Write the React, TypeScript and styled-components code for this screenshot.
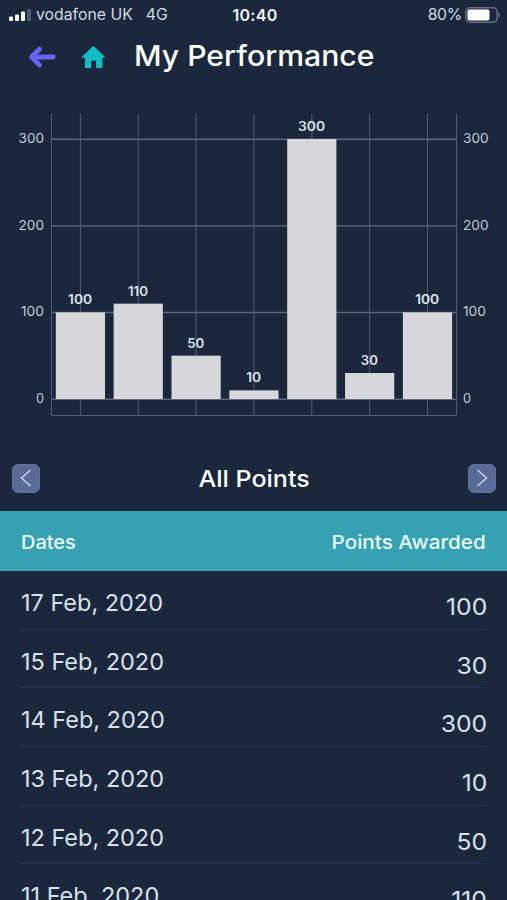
import React from "react";
import styled, { createGlobalStyle } from "styled-components";

const GlobalStyle = createGlobalStyle`
  html, body { margin: 0; background: #1a273d; overflow: hidden; }
  * { box-sizing: border-box; }
`;

const Screen = styled.main`
  width: 507px;
  height: 900px;
  overflow: hidden;
  display: flex;
  flex-direction: column;
  background: #1a273d;
  color: #fff;
  font-family: Inter, "Open Sans", sans-serif;
`;

const StatusBar = styled.header`
  height: 30px;
  flex: none;
  display: grid;
  grid-template-columns: 1fr auto 1fr;
  align-items: center;
  padding: 0 6px 0 9px;
  color: #d3d9e2;
  font-size: 15.8px;
  line-height: 30px;
`;

const Carrier = styled.div`
  display: flex;
  align-items: center;
  gap: 5px;
`;

const Network = styled.span`
  margin-left: 8px;
`;

const Clock = styled.div`
  color: #f4f6f9;
  font-weight: 600;
  font-size: 16px;
  letter-spacing: 0.3px;
`;

const Battery = styled.div`
  display: flex;
  align-items: center;
  justify-content: flex-end;
  gap: 3px;
  letter-spacing: -0.3px;
`;

const NavBar = styled.nav`
  height: 54px;
  flex: none;
  display: flex;
  align-items: center;
  padding: 0 0 0 28px;
`;

const IconButton = styled.button<{ $gap: number }>`
  display: flex;
  padding: 0;
  border: 0;
  background: none;
  margin-right: ${(p) => p.$gap}px;
`;

const Title = styled.h1`
  margin: 0 0 3px;
  font-size: 28px;
  font-weight: 500;
  line-height: 34px;
  white-space: nowrap;
  transform: scaleX(1.078);
  transform-origin: left;
`;

const ChartPanel = styled.section`
  height: 366px;
  flex: none;

  svg {
    display: block;
  }
`;

const Pager = styled.section`
  height: 61px;
  flex: none;
  display: flex;
  align-items: center;
  justify-content: space-between;
  padding: 0 11px 5px 12px;
`;

const PagerButton = styled.button`
  width: 28px;
  height: 29px;
  padding: 0;
  border: 1px solid #60729a;
  border-radius: 6px;
  background: #596c98;
  display: grid;
  place-items: center;
`;

const PagerTitle = styled.h2`
  margin: 2px 0 0;
  font-size: 23px;
  font-weight: 500;
  transform: scaleX(1.088);
`;

const TableHead = styled.div`
  height: 60px;
  flex: none;
  display: flex;
  align-items: center;
  justify-content: space-between;
  padding: 2px 21px 0;
  background: #36a1b2;
  color: #e9fafc;
  font-size: 19px;
  font-weight: 500;
`;

const HeadCell = styled.span<{ $align: "left" | "right" }>`
  transform: scaleX(${(p) => (p.$align === "left" ? 1.05 : 1.088)});
  transform-origin: ${(p) => p.$align};
`;

const Rows = styled.div`
  padding: 0 20px 0 21px;
`;

const Row = styled.div`
  height: 58.65px;
  display: flex;
  justify-content: space-between;
  border-bottom: 1px solid #24334b;
  color: #dae1ea;
  font-size: 23.5px;
  line-height: 30px;
  padding-top: 17px;
`;

const DateCell = styled.span`
  letter-spacing: -0.02px;
`;

const PointsCell = styled.span`
  padding-top: 4px;
  transform: scaleX(1.05);
  transform-origin: right;
`;

const records = [
  { date: "17 Feb, 2020", points: 100 },
  { date: "15 Feb, 2020", points: 30 },
  { date: "14 Feb, 2020", points: 300 },
  { date: "13 Feb, 2020", points: 10 },
  { date: "12 Feb, 2020", points: 50 },
  { date: "11 Feb, 2020", points: 110 },
];

const bars = [
  { value: 100, width: 24 },
  { value: 110, width: 20 },
  { value: 50, width: 17 },
  { value: 10, width: 15 },
  { value: 300, width: 27 },
  { value: 30, width: 17 },
  { value: 100, width: 24 },
];

const ticks = [
  { value: 0, width: 8 },
  { value: 100, width: 23 },
  { value: 200, width: 25.5 },
  { value: 300, width: 25.5 },
];

const yOf = (value: number) => 315 - value * 0.8667;
const xOf = (index: number) => 80.4 + index * 57.85;

function Chart() {
  return (
    <svg width="507" height="366" viewBox="0 0 507 366" fontFamily='Inter, "Open Sans", sans-serif'>
      <g stroke="#535e72" strokeWidth="1" fill="none">
        {bars.map((_, i) => (
          <path key={i} d={`M${xOf(i)} 30V331.5`} />
        ))}
        <path d="M51.5 30V331.5H456.5V30" />
      </g>
      <g stroke="#5d677a" strokeWidth="1.4">
        {ticks.map((t) => (
          <path key={t.value} d={`M51.5 ${yOf(t.value) + 0.2}H456.5`} />
        ))}
      </g>
      {bars.map((bar, i) => (
        <g key={i}>
          <rect x={xOf(i) - 24.6} y={yOf(bar.value)} width="49.2" height={315 - yOf(bar.value)} fill="#d7d6da" />
          <text
            x={xOf(i) - bar.width / 2 - 0.3}
            y={yOf(bar.value) - 8}
            textLength={bar.width}
            lengthAdjust="spacingAndGlyphs"
            fontSize="12.6"
            fontWeight="600"
            fill="#dde4ed"
          >
            {bar.value}
          </text>
        </g>
      ))}
      <g fontSize="13.6" fill="#c3ccd9">
        {ticks.map((t) => (
          <React.Fragment key={t.value}>
            <text x={44 - t.width} y={yOf(t.value) + 4} textLength={t.width} lengthAdjust="spacingAndGlyphs">
              {t.value}
            </text>
            <text x="463" y={yOf(t.value) + 4} textLength={t.width} lengthAdjust="spacingAndGlyphs">
              {t.value}
            </text>
          </React.Fragment>
        ))}
      </g>
    </svg>
  );
}

export default function App() {
  return (
    <>
      <GlobalStyle />
      <Screen>
        <StatusBar>
          <Carrier>
            <svg width="22" height="13" viewBox="0 0 22 13" fill="#fff">
              <rect x="0" y="7.5" width="4" height="4.5" rx="1" />
              <rect x="6" y="5.5" width="4" height="6.5" rx="1" />
              <rect x="12" y="2.5" width="4" height="9.5" rx="1" />
              <rect x="18" y="0" width="4" height="12" rx="1" fill="#4e596d" />
            </svg>
            <span>vodafone UK</span>
            <Network>4G</Network>
          </Carrier>
          <Clock>10:40</Clock>
          <Battery>
            <span>80%</span>
            <svg width="36" height="16" viewBox="0 0 36 16">
              <rect x="0.8" y="0.8" width="31.4" height="14.4" rx="4" fill="none" stroke="#667084" strokeWidth="1.5" />
              <rect x="2.5" y="2.5" width="22" height="11" rx="1.8" fill="#fff" />
              <path d="M33.5 5.3q2.5 2.7 0 5.4z" fill="#778195" />
            </svg>
          </Battery>
        </StatusBar>

        <NavBar>
          <IconButton $gap={25} aria-label="Back">
            <svg width="28" height="24" viewBox="0 0 28 24" fill="none" stroke="#6a64f2" strokeWidth="4.8" strokeLinecap="round" strokeLinejoin="round">
              <path d="M11.5 4 3.5 12l8 8M4 12h21.3" />
            </svg>
          </IconButton>
          <IconButton $gap={29} aria-label="Home">
            <svg width="24" height="24" viewBox="0 0 24 24" fill="#10bdc7">
              <path d="M12.4 .7 24 12q.2.8-.8.8H21.4v9.3q0 .9-.9.9h-5.4v-7.6h-5v7.6H4.8q-.9 0-.9-.9v-9.3H1.5q-1 0-.8-.8Z" />
            </svg>
          </IconButton>
          <Title>My Performance</Title>
        </NavBar>

        <ChartPanel>
          <Chart />
        </ChartPanel>

        <Pager>
          <PagerButton aria-label="Previous">
            <svg width="12" height="18" viewBox="0 0 12 18" fill="none" stroke="#c9d4e8" strokeWidth="1.5">
              <path d="m10.5 1-9 8 9 8" />
            </svg>
          </PagerButton>
          <PagerTitle>All Points</PagerTitle>
          <PagerButton aria-label="Next">
            <svg width="12" height="18" viewBox="0 0 12 18" fill="none" stroke="#c9d4e8" strokeWidth="1.5">
              <path d="m1.5 1 9 8-9 8" />
            </svg>
          </PagerButton>
        </Pager>

        <TableHead>
          <HeadCell $align="left">Dates</HeadCell>
          <HeadCell $align="right">Points Awarded</HeadCell>
        </TableHead>
        <Rows>
          {records.map((r) => (
            <Row key={r.date}>
              <DateCell>{r.date}</DateCell>
              <PointsCell>{r.points}</PointsCell>
            </Row>
          ))}
        </Rows>
      </Screen>
    </>
  );
}
